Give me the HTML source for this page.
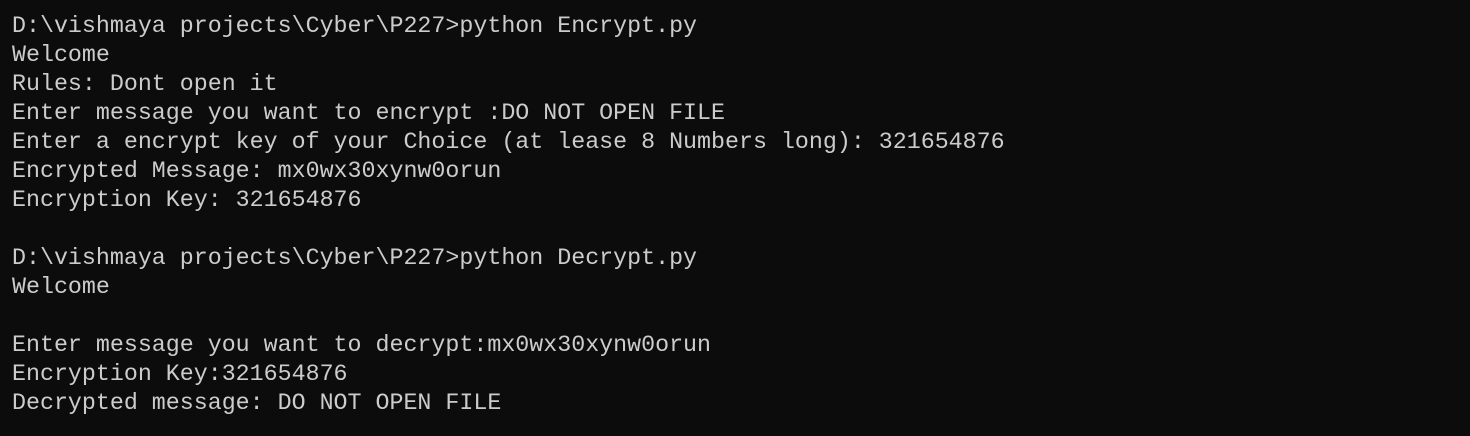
<!DOCTYPE html>
<html><head><style>
html,body{margin:0;padding:0;background:#0c0c0c;width:1470px;height:436px;overflow:hidden}
pre{margin:0;padding:12px 0 0 12px;font-family:"Liberation Mono",monospace;font-size:23.3px;line-height:29px;color:#cccccc;white-space:pre}
</style></head><body><pre>D:\vishmaya projects\Cyber\P227>python Encrypt.py
Welcome
Rules: Dont open it
Enter message you want to encrypt :DO NOT OPEN FILE
Enter a encrypt key of your Choice (at lease 8 Numbers long): 321654876
Encrypted Message: mx0wx30xynw0orun
Encryption Key: 321654876

D:\vishmaya projects\Cyber\P227>python Decrypt.py
Welcome

Enter message you want to decrypt:mx0wx30xynw0orun
Encryption Key:321654876
Decrypted message: DO NOT OPEN FILE</pre></body></html>
